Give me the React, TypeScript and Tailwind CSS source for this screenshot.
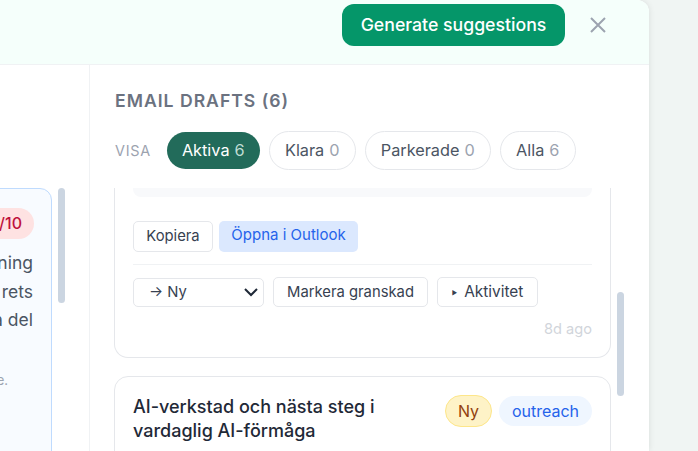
import React from "react";

const pill = "flex h-[39px] items-center rounded-full border border-[#e5e7eb] bg-white text-[16.3px] text-[#4b5563]";

export default function App() {
  return (
    <div className="h-[451px] w-[698px] overflow-hidden bg-[#f0f5f3]" style={{ fontFamily: "Inter, 'Liberation Sans', sans-serif" }}>
      <div className="flex h-[451px] w-[649px] flex-col overflow-hidden rounded-tr-xl bg-white shadow-[0_0_6px_rgba(0,0,0,0.1)]">
        <div className="flex h-[65px] shrink-0 items-start justify-end border-b border-[#f0f2f4] bg-[#f5fffb] pt-1 pr-[42px]">
          <button className="flex h-[42px] w-[223px] items-center justify-center rounded-[12px] bg-[#059669] text-[17.7px] font-[450] text-white">Generate suggestions</button>
          <svg className="ml-[24px] mt-[12px]" width="18" height="18" viewBox="0 0 18 18" fill="none" stroke="#9ca3af" strokeWidth="2"><path d="M2 2 L16 16 M16 2 L2 16" /></svg>
        </div>
        <div className="flex min-h-0 flex-1">
          <div className="flex w-[90px] shrink-0 gap-[6px] border-r border-[#f0f2f4] pt-[123px]">
            <div className="-ml-[60px] h-[400px] w-[112px] shrink-0 rounded-xl border border-[#bfdbfe] bg-[#f8fbff] pl-[8px] pt-[19px]">
              <div className="flex justify-end pr-[17px]">
                <span className="rounded-full bg-[#fee2e2] px-[12px] py-[4px] text-[16px] leading-[23px] font-[450] text-[#be123c]">9/10</span>
              </div>
              <div className="mt-[10px] pr-[18px] text-right text-[17.5px] leading-[28.5px] text-[#4b5563]">
                <div>ning</div>
                <div>rets</div>
                <div>a del</div>
              </div>
              <div className="mt-[36px] pr-[43px] text-right text-[13px] text-[#9ca3af]">e.</div>
            </div>
            <div className="h-[115px] w-[7px] shrink-0 rounded-full bg-[#cbd5e1]" />
          </div>
          <div className="min-w-0 flex-1 pl-[24px]">
            <h2 className="mt-[25px] pl-[1px] text-[17.6px] leading-[22px] font-semibold tracking-[1px] text-[#6b7280]">EMAIL DRAFTS (6)</h2>
            <div className="mt-[19px] flex items-center">
              <span className="mr-[16px] pl-[1px] text-[14.4px] font-normal tracking-[0.7px] text-[#9ca3af]">VISA</span>
              <span className="flex h-[37px] w-[93px] items-center justify-center rounded-full bg-[#226b5a] text-[16.3px] font-normal text-white">Aktiva<span className="ml-[5px] font-normal text-[#bfdcd3]">6</span></span>
              <span className={`${pill} ml-[9px] w-[87px] justify-center`}>Klara<span className="ml-[5px] text-[#9ca3af]">0</span></span>
              <span className={`${pill} ml-[9px] w-[126px] justify-center`}>Parkerade<span className="ml-[5px] text-[#9ca3af]">0</span></span>
              <span className={`${pill} ml-[9px] w-[76px] justify-center`}>Alla<span className="ml-[5px] text-[#9ca3af]">6</span></span>
            </div>
            <div className="mt-[18px] flex h-[263px] gap-[6px] overflow-hidden">
              <div className="flex w-[497px] shrink-0 flex-col gap-[18px]">
                <div className="h-[170px] shrink-0 rounded-b-[14px] border border-t-0 border-[#e5e7eb] px-[18px]">
                  <div className="h-[9px] rounded-b-lg bg-[#f8f9fb]" />
                  <div className="mt-[24px] flex items-center gap-[6px] pb-[12px]">
                    <button className="h-[31px] w-[80px] rounded-[5px] border border-[#e5e7eb] bg-white text-[14.8px] text-[#374151]">Kopiera</button>
                    <button className="h-[31px] w-[139px] rounded-[5px] bg-[#dbe8fe] pb-[2px] text-[15px] text-[#2563eb]">Öppna i Outlook</button>
                  </div>
                  <div className="flex items-center gap-[9px] border-t border-[#f0f2f4] pt-[12px]">
                    <div className="flex h-[29px] w-[131px] items-center rounded-[5px] border border-[#e5e7eb] bg-white pl-[15px] pr-[5px] text-[14.8px] text-[#374151]">
                      <span className="flex-1">→ Ny</span>
                      <svg width="14" height="14" viewBox="0 0 14 14" fill="none" stroke="#1f2937" strokeWidth="2"><path d="M1 4 L7 10 L13 4" /></svg>
                    </div>
                    <button className="h-[30px] w-[155px] rounded-[5px] border border-[#e5e7eb] bg-white text-[14.8px] text-[#374151]">Markera granskad</button>
                    <button className="flex h-[30px] w-[101px] items-center justify-center rounded-[5px] border border-[#e5e7eb] bg-white text-[15.4px] text-[#374151]"><span className="mr-[7px] text-[6px]">►</span>Aktivitet</button>
                  </div>
                  <div className="mt-[14px] text-right text-[14.6px] leading-[17px] text-[#d1d5db]">8d ago</div>
                </div>
                <div className="flex h-[120px] shrink-0 items-start justify-between rounded-[14px] border border-[#e5e7eb] pl-[18px] pr-[18px] pt-[18px]">
                  <div className="w-[300px] text-[18px] leading-[24px] font-[450] text-[#1f2937]">AI-verkstad och nästa steg i vardaglig AI-förmåga</div>
                  <div className="flex items-center gap-[7px]">
                    <span className="flex h-[32px] items-center rounded-full border border-[#fde68a] bg-[#fef3c7] px-[12px] text-[16px] font-normal text-[#92400e]">Ny</span>
                    <span className="flex h-[30px] w-[93px] items-center justify-center rounded-full bg-[#eff6ff] text-[16px] font-normal text-[#2563eb]">outreach</span>
                  </div>
                </div>
              </div>
              <div className="mt-[104px] h-[104px] w-[7px] shrink-0 rounded-full bg-[#cbd5e1]" />
            </div>
          </div>
        </div>
      </div>
    </div>
  );
}
